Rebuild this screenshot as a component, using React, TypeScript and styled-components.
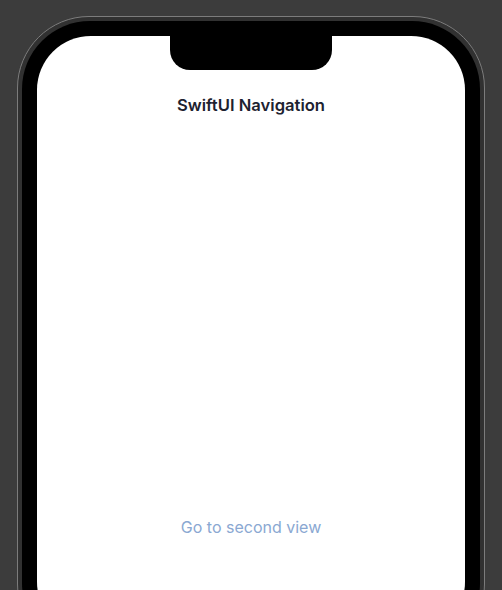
import React from "react";
import styled, { createGlobalStyle } from "styled-components";

const Global = createGlobalStyle`
  html, body {
    margin: 0;
    padding: 0;
    background: #3c3c3c;
    overflow: hidden;
  }
  body {
    font-family: Inter, "Liberation Sans", sans-serif;
  }
`;

const Stage = styled.div`
  width: 502px;
  height: 590px;
  overflow: hidden;
  padding: 16px 0 0 17px;
  box-sizing: border-box;
`;

const Frame = styled.div`
  width: 468px;
  height: 640px;
  box-sizing: border-box;
  border: 1px solid #7c7c7c;
  border-radius: 72px;
  background: #313131;
  padding: 4px;
`;

const Bezel = styled.div`
  height: 100%;
  box-sizing: border-box;
  background: #000;
  border-radius: 68px;
  padding: 15px 15px;
`;

const Screen = styled.div`
  position: relative;
  height: 100%;
  background: #fff;
  border-radius: 54px;
  display: flex;
  flex-direction: column;
  align-items: center;
`;

const Notch = styled.div`
  position: absolute;
  top: 0;
  left: 50%;
  transform: translateX(-50%);
  width: 162px;
  height: 34px;
  background: #000;
  border-radius: 0 0 20px 20px;
`;

const Title = styled.h1`
  margin: 59px 0 0;
  font-size: 16.6px;
  line-height: 20px;
  font-weight: 600;
  color: #1d2230;
  letter-spacing: 0;
`;

const LinkButton = styled.button`
  margin-top: 402px;
  border: none;
  background: none;
  padding: 0;
  font-family: inherit;
  font-size: 16px;
  line-height: 20px;
  font-weight: 400;
  color: #8aa8d2;
  cursor: pointer;
`;

export default function App() {
  return (
    <>
      <Global />
      <Stage>
        <Frame>
          <Bezel>
            <Screen>
              <Notch />
              <Title>SwiftUI Navigation</Title>
              <LinkButton>Go to second view</LinkButton>
            </Screen>
          </Bezel>
        </Frame>
      </Stage>
    </>
  );
}
